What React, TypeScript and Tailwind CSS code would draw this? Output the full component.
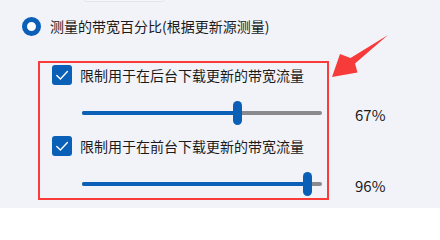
import React from "react";

type Limit = {
  label: string;
  value: number;
  thumbLeft: number;
};

const limits: Limit[] = [
  { label: "限制用于在后台下载更新的带宽流量", value: 67, thumbLeft: 151 },
  { label: "限制用于在前台下载更新的带宽流量", value: 96, thumbLeft: 221 },
];

function CheckBox() {
  return (
    <span className="flex h-[20px] w-[20px] shrink-0 items-center justify-center rounded-[3px] bg-[#0a5fb6]">
      <svg width="20" height="20" viewBox="0 0 20 20" fill="none">
        <path d="M4.8 10.4 L8.4 13.9 L15.4 6.4" stroke="white" strokeWidth="1.4" strokeLinecap="round" strokeLinejoin="round" />
      </svg>
    </span>
  );
}

function Slider({ thumbLeft }: { thumbLeft: number }) {
  return (
    <div className="relative h-[24px] w-[240px]">
      <div className="absolute left-0 right-0 top-[10px] h-[4px] rounded-full bg-[#8a8a8e]" />
      <div
        className="absolute left-0 top-[10px] h-[4px] rounded-l-full bg-[#0a5fb6]"
        style={{ width: thumbLeft + 4 }}
      />
      <div
        className="absolute top-0 h-[24px] w-[9px] rounded-full bg-[#0a5fb6]"
        style={{ left: thumbLeft }}
      />
    </div>
  );
}

export default function App() {
  return (
    <div
      className="relative flex h-[208px] w-[440px] flex-col overflow-hidden bg-[#f1f3f9] text-[#1b1b1b]"
      style={{ fontFamily: '"Noto Sans CJK SC", "Noto Sans", sans-serif' }}
    >
      {/* edge of the button above, cut off */}
      <div className="ml-[82px] mt-[-20px] h-[22px] w-[84px] shrink-0 rounded-[5px] border border-[#e2e4ea] bg-[#f6f7fb]" />

      <div className="ml-[22px] mt-[15px] flex h-[19px] shrink-0 items-center">
        <span className="h-[19px] w-[19px] rounded-full border-[5.5px] border-[#0a5fb6] bg-white" />
        <span className="ml-[9px] text-[14px] leading-[19px]">测量的带宽百分比(根据更新源测量)</span>
      </div>

      <div className="ml-[52px] mt-[29px] flex flex-col">
        {limits.map((l, i) => (
          <div key={l.label} className={i === 0 ? "" : "mt-[11px]"}>
            <div className="flex h-[20px] items-center">
              <CheckBox />
              <span className="ml-[8px] text-[14px] leading-[20px]">{l.label}</span>
            </div>
            <div className="mt-[16px] flex h-[24px] items-center">
              <div className="ml-[30px]">
                <Slider thumbLeft={l.thumbLeft} />
              </div>
              <span className="ml-[33px] mt-[4px] text-[15px] leading-[20px]">{l.value}%</span>
            </div>
          </div>
        ))}
      </div>

      {/* annotation */}
      <div className="pointer-events-none absolute left-[38px] top-[61px] h-[139px] w-[291px] border-[2.5px] border-[#fb3a3a]" />
      <svg className="pointer-events-none absolute left-0 top-0" width="440" height="208" viewBox="0 0 440 208">
        <polygon
          points="388,35 355,63.5 357.5,72.5 332,77 340,54 350.5,58"
          fill="#f73b3b"
        />
      </svg>
    </div>
  );
}
